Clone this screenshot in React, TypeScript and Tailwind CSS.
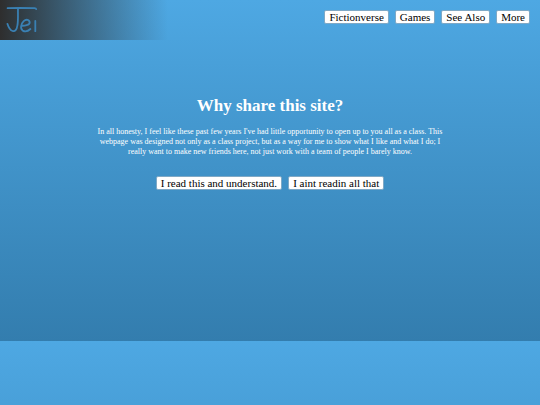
import type { ReactNode } from 'react'

const navItems = ['Fictionverse', 'Games', 'See Also', 'More']

function PageButton({ children }: { children: ReactNode }) {
  return (
    <button
      type="button"
      className="h-[14px] rounded-[2px] border border-[#7fa9c6] bg-white px-1 text-[11px] leading-[12px] whitespace-nowrap text-black"
    >
      {children}
    </button>
  )
}

function Logo() {
  return (
    <svg
      viewBox="0 0 36 28"
      role="img"
      aria-label="Jei"
      className="h-[28px] w-[36px]"
      fill="none"
      stroke="#3a80b3"
      strokeWidth="1.8"
      strokeLinecap="round"
      strokeLinejoin="round"
    >
      <path d="M1.6 2.2C8 2 20 2 28.5 2.2C29.7 2.3 30.1 2.6 30.2 3.2" />
      <path d="M12 2.6C11.8 8 12.4 14 11.4 19.5C10.8 23.8 9 25.7 6.6 25C3.8 24.2 2.4 21 1.4 17.8" />
      <path d="M15.4 19.7C18.6 19.9 23.6 19.2 23.7 16.6C23.6 13.6 20.2 12.8 17.7 15.2C15 17.8 13.9 22.8 16.7 24.6C18.8 25.8 22 25.3 24.4 23" />
      <path d="M29.3 15V25.2" />
    </svg>
  )
}

export default function App() {
  return (
    <div className="min-h-screen bg-linear-to-b from-[#4ea8e3] to-[#337dae] bg-[length:100%_341px] font-['Liberation_Serif',serif]">
      <header className="flex h-10 items-start justify-between">
        <a
          href="#"
          className="flex h-10 w-[168px] items-start bg-linear-to-r from-[#2e2e2e] to-transparent pt-[6px] pl-[6px]"
        >
          <Logo />
        </a>
        <nav className="flex gap-[6px] pt-[10px] pr-[10px]">
          {navItems.map((item) => (
            <PageButton key={item}>{item}</PageButton>
          ))}
        </nav>
      </header>

      <main className="flex flex-col items-center px-20 pt-14 text-center text-white">
        <h1 className="text-[17px] leading-5 font-bold">Why share this site?</h1>
        <p className="mt-[11px] max-w-[356px] text-[8px] leading-[10px]">
          In all honesty, I feel like these past few years I've had little opportunity to open up to you all as a class. This
          webpage was designed not only as a class project, but as a way for me to show what I like and what I do; I really
          want to make new friends here, not just work with a team of people I barely know.
        </p>
        <div className="mt-[19px] flex gap-[6px]">
          <PageButton>I read this and understand.</PageButton>
          <PageButton>I aint readin all that</PageButton>
        </div>
      </main>
    </div>
  )
}
